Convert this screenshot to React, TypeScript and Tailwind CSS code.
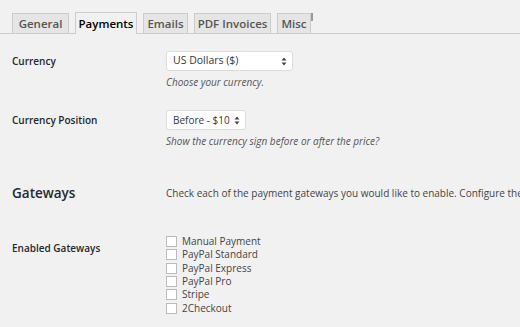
import { useState } from 'react';

const tabs = [
  { name: 'General', w: 'w-[57px]' },
  { name: 'Payments', w: 'w-[62px]' },
  { name: 'Emails', w: 'w-[45px]' },
  { name: 'PDF Invoices', w: 'w-[77px]' },
  { name: 'Misc', w: 'w-[34px]' },
];
const gateways = ['Manual Payment', 'PayPal Standard', 'PayPal Express', 'PayPal Pro', 'Stripe', '2Checkout'];

function SelectArrows() {
  return (
    <svg width="6" height="9" viewBox="0 0 6 9" className="ml-auto shrink-0">
      <path d="M3 0.5 L5.5 3.5 H0.5 Z" fill="#444" />
      <path d="M3 8.5 L5.5 5.5 H0.5 Z" fill="#444" />
    </svg>
  );
}

export default function App() {
  const [active] = useState('Payments');
  const [checked, setChecked] = useState<string[]>([]);

  return (
    <div className="h-[327px] w-[520px] overflow-hidden bg-[#f1f1f1] text-[#23282d]" style={{ fontFamily: '"Open Sans", sans-serif' }}>
      {/* Tabs */}
      <div className="flex items-end gap-[6px] border-b border-[#ccc] pl-[12px] pt-[12px]">
        {tabs.map((t) => (
          <div
            key={t.name}
            className={
              t.name === active
                ? `-mb-px h-[22px] ${t.w} whitespace-nowrap border border-b-0 border-[#ccc] bg-[#f1f1f1] pt-[2px] text-center text-[11.5px] font-semibold leading-[18px] text-black`
                : `h-[20px] ${t.w} whitespace-nowrap border border-b-0 border-[#ccc] bg-[#e5e5e5] pt-[1px] text-center text-[11.5px] font-semibold leading-[18px] text-[#555]`
            }
          >
            {t.name}
          </div>
        ))}
        <div className="mb-[12px] ml-[-6px] h-[8px] w-[2px] bg-[#999]" />
      </div>

      <div className="grid grid-cols-[154px_1fr] pl-[12px] text-[10px]">
        {/* Currency */}
        <div className="mt-[17px] flex h-[20px] items-center font-semibold">Currency</div>
        <div className="mt-[17px]">
          <div className="flex h-[20px] w-[127px] items-center rounded-[3px] border border-[#ddd] bg-white pl-[6px] pr-[5px] text-[10.5px] text-[#32373c]">
            US Dollars ($)
            <SelectArrows />
          </div>
          <div className="mt-[3px] text-[10px] italic leading-[16px] text-[#555]">Choose your currency.</div>
        </div>

        {/* Currency Position */}
        <div className="mt-[20px] flex h-[20px] items-center font-semibold">Currency Position</div>
        <div className="mt-[20px]">
          <div className="flex h-[20px] w-[80px] items-center whitespace-nowrap rounded-[3px] border border-[#ddd] bg-white pl-[6px] pr-[5px] text-[10px] text-[#32373c]">
            Before - $10
            <SelectArrows />
          </div>
          <div className="mt-[3px] whitespace-nowrap text-[10px] italic leading-[16px] text-[#555]">
            Show the currency sign before or after the price?
          </div>
        </div>

        {/* Gateways heading */}
        <div className="mt-[34px] text-[13.5px] font-semibold leading-[20px]">Gateways</div>
        <div className="mt-[34px] flex h-[20px] items-center whitespace-nowrap text-[10px] text-[#444]">
          Check each of the payment gateways you would like to enable. Configure the settings for each below.
        </div>

        {/* Enabled Gateways */}
        <div className="mt-[32px] pt-[5px] font-semibold leading-[16px]">Enabled Gateways</div>
        <div className="mt-[32px] flex flex-col">
          {gateways.map((g) => (
            <label key={g} className="flex h-[13.3px] items-center gap-[5px] leading-[13px] text-[#444]">
              <span
                onClick={() => setChecked((c) => (c.includes(g) ? c.filter((x) => x !== g) : [...c, g]))}
                className="h-[11px] w-[11px] shrink-0 border border-[#bbb] bg-white"
              />
              {g}
            </label>
          ))}
        </div>
      </div>
    </div>
  );
}
